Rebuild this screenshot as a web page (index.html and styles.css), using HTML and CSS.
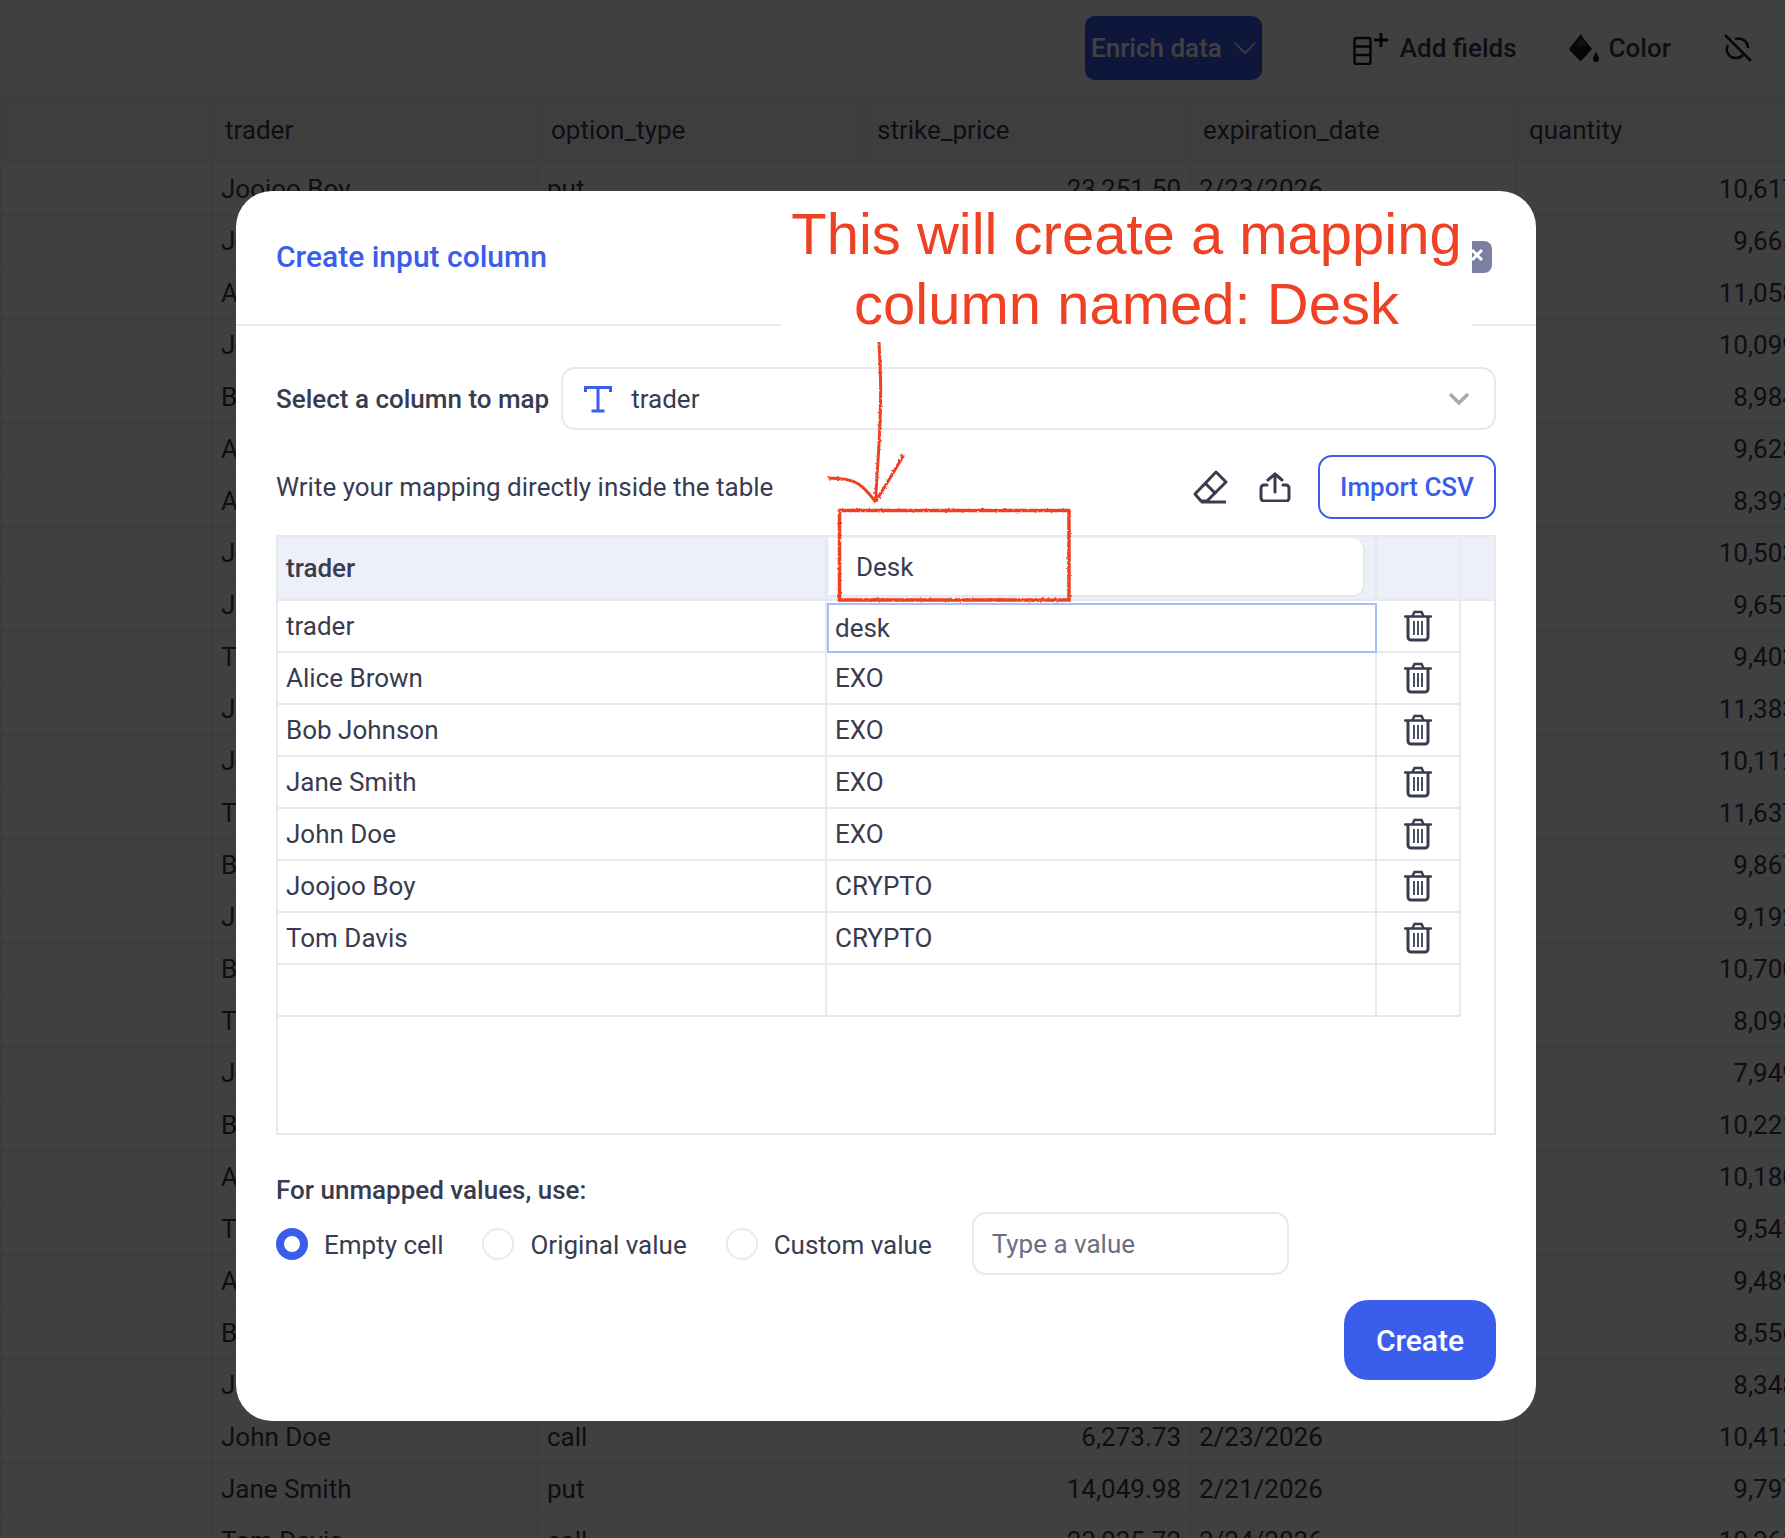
FILE: index.html
```html
<!DOCTYPE html>
<html lang="en">
<head>
    <meta charset="UTF-8">
    <title>Create input column</title>
    <link rel="stylesheet" href="styles.css">
</head>
<body>
<!-- Page behind the dialog -->
<div class="toolbar">
    <button class="enrich">Enrich data
        <svg width="22" height="14" viewBox="0 0 22 14"><path d="M1 2l10 10L21 2" fill="none" stroke="currentColor" stroke-width="1.6"/></svg>
    </button>
    <span class="toolbar-sep"></span>
    <span class="tool">
        <svg width="37" height="33" viewBox="0 0 37 33" fill="none" stroke="#1a1b24" stroke-width="2.5"><rect x="1.5" y="6" width="16" height="26" rx="2"/><path d="M1.5 14.5h16M1.5 23h16"/><path d="M28 1v14M21 8h14" stroke-width="3"/></svg>
        Add fields
    </span>
    <span class="tool">
        <svg width="30" height="30" viewBox="0 0 30 30"><path d="M12 1l1.500 3 9.500 12-10 11a2 2 0 0 1-3 0L1 17.500a2 2 0 0 1 0-3z" fill="#1a1b24"/><path d="M5 13h14L12 5z" fill="#404040"/><path d="M27 19c2 3 3 5 3 7a3 3 0 0 1-6 0c0-2 1-4 3-7z" fill="#1a1b24"/></svg>
        Color
    </span>
    <span class="tool">
        <svg width="30" height="30" viewBox="0 0 30 30" fill="none" stroke="#1a1b24" stroke-width="2.5"><path d="M2 2l26 26"/><path d="M5 12c-3 5 0 13 8 13 3 0 5-1 7-3"/><path d="M12 6c6-2 13 2 13 9"/></svg>
    </span>
</div>
<table class="sheet">
    <thead>
        <tr><th></th><th>trader</th><th>option_type</th><th>strike_price</th><th>expiration_date</th><th>quantity</th><th>direction</th></tr>
    </thead>
    <tbody>
        <tr><td></td><td>Joojoo Boy</td><td>put</td><td class="num">23,251.50</td><td>2/23/2026</td><td class="num">10,617.00</td><td>long</td></tr>
        <tr><td></td><td>John Doe</td><td></td><td></td><td></td><td class="num">9,665.00</td><td>long</td></tr>
        <tr><td></td><td>Alice Brown</td><td></td><td></td><td></td><td class="num">11,058.00</td><td>short</td></tr>
        <tr><td></td><td>Jane Smith</td><td></td><td></td><td></td><td class="num">10,099.00</td><td>short</td></tr>
        <tr><td></td><td>Bob Johnson</td><td></td><td></td><td></td><td class="num">8,984.00</td><td>long</td></tr>
        <tr><td></td><td>Alice Brown</td><td></td><td></td><td></td><td class="num">9,628.00</td><td>long</td></tr>
        <tr><td></td><td>Alice Brown</td><td></td><td></td><td></td><td class="num">8,392.00</td><td>short</td></tr>
        <tr><td></td><td>John Doe</td><td></td><td></td><td></td><td class="num">10,503.00</td><td>short</td></tr>
        <tr><td></td><td>Jane Smith</td><td></td><td></td><td></td><td class="num">9,657.00</td><td>long</td></tr>
        <tr><td></td><td>Tom Davis</td><td></td><td></td><td></td><td class="num">9,403.00</td><td>long</td></tr>
        <tr><td></td><td>Jane Smith</td><td></td><td></td><td></td><td class="num">11,383.00</td><td>long</td></tr>
        <tr><td></td><td>John Doe</td><td></td><td></td><td></td><td class="num">10,112.00</td><td>long</td></tr>
        <tr><td></td><td>Tom Davis</td><td></td><td></td><td></td><td class="num">11,637.00</td><td>short</td></tr>
        <tr><td></td><td>Bob Johnson</td><td></td><td></td><td></td><td class="num">9,867.00</td><td>short</td></tr>
        <tr><td></td><td>John Doe</td><td></td><td></td><td></td><td class="num">9,192.00</td><td>short</td></tr>
        <tr><td></td><td>Bob Johnson</td><td></td><td></td><td></td><td class="num">10,700.00</td><td>short</td></tr>
        <tr><td></td><td>Tom Davis</td><td></td><td></td><td></td><td class="num">8,098.00</td><td>long</td></tr>
        <tr><td></td><td>John Doe</td><td></td><td></td><td></td><td class="num">7,949.00</td><td>short</td></tr>
        <tr><td></td><td>Bob Johnson</td><td></td><td></td><td></td><td class="num">10,221.00</td><td>short</td></tr>
        <tr><td></td><td>Alice Brown</td><td></td><td></td><td></td><td class="num">10,180.00</td><td>long</td></tr>
        <tr><td></td><td>Tom Davis</td><td></td><td></td><td></td><td class="num">9,541.00</td><td>long</td></tr>
        <tr><td></td><td>Alice Brown</td><td></td><td></td><td></td><td class="num">9,489.00</td><td>long</td></tr>
        <tr><td></td><td>Bob Johnson</td><td></td><td></td><td></td><td class="num">8,556.00</td><td>short</td></tr>
        <tr><td></td><td>John Doe</td><td></td><td></td><td></td><td class="num">8,348.00</td><td>short</td></tr>
        <tr><td></td><td>John Doe</td><td>call</td><td class="num">6,273.73</td><td>2/23/2026</td><td class="num">10,412.00</td><td>long</td></tr>
        <tr><td></td><td>Jane Smith</td><td>put</td><td class="num">14,049.98</td><td>2/21/2026</td><td class="num">9,797.00</td><td>short</td></tr>
        <tr><td></td><td>Tom Davis</td><td>call</td><td class="num">23,035.72</td><td>2/24/2026</td><td class="num">10,261.00</td><td>long</td></tr>
    </tbody>
</table>

<!-- Dialog -->
<div class="overlay">
    <div class="modal">
        <header class="modal-head">
            <h2>Create input column</h2>
            <button class="close">
                <svg width="14" height="14" viewBox="0 0 14 14"><path d="M2 2l10 10M12 2L2 12" stroke="#fff" stroke-width="3"/></svg>
            </button>
        </header>

        <div class="modal-body">
            <div class="select-row">
                <label class="strong">Select a column to map</label>
                <div class="select">
                    <svg width="30" height="30" viewBox="0 0 30 30" fill="none" stroke="#3a5eeb" stroke-width="3"><path d="M2.500 8V3.500h25V8M15 3.500V27M8.500 27h13"/></svg>
                    <span>trader</span>
                    <svg class="chevron" width="22" height="14" viewBox="0 0 22 14"><path d="M2 2l9 9 9-9" fill="none" stroke="#a8a9b5" stroke-width="3.500"/></svg>
                </div>
            </div>

            <div class="write-row">
                <span class="write-text">Write your mapping directly inside the table</span>
                <svg class="eraser" width="36" height="34" viewBox="0 0 36 34" fill="none" stroke="#393b50" stroke-width="3" stroke-linejoin="round"><path d="M23 2l10 10-19 19H8l-6-7z"/><path d="M12 13l11 11M8 32h25"/></svg>
                <svg class="upload" width="32" height="30" viewBox="0 0 32 30" fill="none" stroke="#393b50" stroke-width="3" stroke-linecap="round"><path d="M8 13H5a3 3 0 0 0-3 3v10a3 3 0 0 0 3 3h22a3 3 0 0 0 3-3V16a3 3 0 0 0-3-3h-3"/><path d="M16 20V2M9 8l7-6 7 6"/></svg>
                <button class="import">Import CSV</button>
            </div>

            <div class="map-table">
                <div class="map-head">
                    <div class="map-cell map-title">trader</div>
                    <div class="map-cell map-name"><span class="name-input">Desk</span></div>
                    <div class="map-cell"></div>
                </div>
                <div class="map-row"><div class="map-cell">trader</div><div class="map-cell selected">desk</div><div class="map-cell trash"><svg width="28" height="32" viewBox="0 0 28 32" fill="none" stroke="#393b50"><use href="#trash"/></svg></div></div>
                <div class="map-row"><div class="map-cell">Alice Brown</div><div class="map-cell">EXO</div><div class="map-cell trash"><svg width="28" height="32" viewBox="0 0 28 32" fill="none" stroke="#393b50"><use href="#trash"/></svg></div></div>
                <div class="map-row"><div class="map-cell">Bob Johnson</div><div class="map-cell">EXO</div><div class="map-cell trash"><svg width="28" height="32" viewBox="0 0 28 32" fill="none" stroke="#393b50"><use href="#trash"/></svg></div></div>
                <div class="map-row"><div class="map-cell">Jane Smith</div><div class="map-cell">EXO</div><div class="map-cell trash"><svg width="28" height="32" viewBox="0 0 28 32" fill="none" stroke="#393b50"><use href="#trash"/></svg></div></div>
                <div class="map-row"><div class="map-cell">John Doe</div><div class="map-cell">EXO</div><div class="map-cell trash"><svg width="28" height="32" viewBox="0 0 28 32" fill="none" stroke="#393b50"><use href="#trash"/></svg></div></div>
                <div class="map-row"><div class="map-cell">Joojoo Boy</div><div class="map-cell">CRYPTO</div><div class="map-cell trash"><svg width="28" height="32" viewBox="0 0 28 32" fill="none" stroke="#393b50"><use href="#trash"/></svg></div></div>
                <div class="map-row"><div class="map-cell">Tom Davis</div><div class="map-cell">CRYPTO</div><div class="map-cell trash"><svg width="28" height="32" viewBox="0 0 28 32" fill="none" stroke="#393b50"><use href="#trash"/></svg></div></div>
                <div class="map-row"><div class="map-cell"></div><div class="map-cell"></div><div class="map-cell"></div></div>
            </div>

            <div class="unmapped strong">For unmapped values, use:</div>
            <div class="radio-row">
                <span class="radio on"></span><span class="radio-label">Empty cell</span>
                <span class="radio"></span><span class="radio-label">Original value</span>
                <span class="radio"></span><span class="radio-label">Custom value</span>
                <span class="value-input">Type a value</span>
            </div>
            <div class="actions"><button class="create">Create</button></div>
        </div>

        <!-- Annotation pasted on top of the screenshot -->
        <div class="note">This will create a mapping<br>column named: Desk</div>
        <svg class="scribble" width="260" height="275" viewBox="0 0 260 275" fill="none" stroke="#ef4123" stroke-width="3">
            <filter id="rough"><feTurbulence type="fractalNoise" baseFrequency="0.4" numOctaves="2" seed="3"/><feDisplacementMap in="SourceGraphic" scale="2.500"/></filter>
            <g filter="url(#rough)">
                <path d="M19.500 175.500H249V265H19.500z" stroke-width="3.500"/>
                <path d="M59 7c2 40 2 50 1 80-1 30-3 50-4.500 80"/>
                <path d="M8.500 143c14 1 22 1 30 6 6 4 12 11 17 18 8-14 20-32 28-47"/>
            </g>
        </svg>
    </div>
</div>

<svg width="0" height="0" class="defs">
    <g id="trash">
        <path d="M8.500 6l2-4h7l2 4" stroke-width="2.500"/>
        <path d="M1 6.500h26" stroke-width="2.500" stroke-linecap="round"/>
        <path d="M4 6.500V27a3 3 0 0 0 3 3h14a3 3 0 0 0 3-3V6.500" stroke-width="3"/>
        <path d="M10 11v14M14 11v14M18 11v14" stroke-width="1.800"/>
    </g>
</svg>
</body>
</html>
```

FILE: styles.css
```css
/* General Styles */
html, body {
    margin: 0;
    height: 1538px;
    overflow: hidden;
}
body {
    font-family: Roboto, sans-serif;
    font-size: 26px;
    color: #393b50;
    background: #fff;
}
button {
    font-family: inherit;
    cursor: pointer;
}
.defs {
    position: absolute;
}

/* Page behind the dialog */
.toolbar {
    height: 96px;
    box-sizing: border-box;
    padding: 16px 0 16px 1085px;
    display: flex;
    align-items: center;
    white-space: nowrap;
}
.enrich {
    width: 206px;
    height: 64px;
    display: flex;
    align-items: center;
    justify-content: center;
    gap: 12px;
    border: none;
    border-radius: 10px;
    background: #3a5eeb;
    color: #fff;
    font-size: 26px;
    font-weight: 500;
}
.toolbar-sep {
    width: 2px;
    height: 64px;
    margin: 0 55px 0 36px;
    background: #eceef2;
}
.tool {
    display: flex;
    align-items: center;
    gap: 10px;
    margin-right: 52px;
    font-weight: 500;
}
.sheet {
    width: 1985px;
    table-layout: fixed;
    border-collapse: collapse;
    white-space: nowrap;
}
.sheet th:first-child { width: 185px; }
.sheet th { width: 300px; }
.sheet th {
    height: 64px;
    padding: 0 12px;
    text-align: left;
    font-weight: 400;
    background: #f5f6fb;
    border: 2px solid #eceef2;
}
.sheet td {
    height: 52px;
    padding: 0 8px;
    box-sizing: border-box;
    overflow: hidden;
    border: 2px solid #eceef2;
}
.sheet .num {
    text-align: right;
}

/* Dialog */
.overlay {
    position: fixed;
    inset: 0;
    padding: 191px 0 0 236px;
    background: rgba(0, 0, 0, 0.75);
}
.modal {
    position: relative;
    width: 1300px;
    height: 1230px;
    background: #fff;
    border-radius: 36px;
}
.modal-head {
    height: 135px;
    box-sizing: border-box;
    padding: 0 44px 2px 40px;
    display: flex;
    align-items: center;
    justify-content: space-between;
    border-bottom: 2px solid #e9eaf0;
}
.modal-head h2 {
    margin: 0;
    font-size: 30px;
    font-weight: 500;
    color: #3a5eeb;
}
.close {
    width: 32px;
    height: 32px;
    padding: 0 0 0 2px;
    margin-top: 0;
    border: none;
    border-radius: 8px;
    background: #7b80a0;
    text-align: center;
}
.modal-body {
    padding: 41px 40px 0;
}
.strong {
    font-weight: 500;
}
.select-row {
    display: flex;
    align-items: center;
    gap: 12px;
}
.select {
    flex: 1;
    height: 63px;
    box-sizing: border-box;
    padding: 0 24px 0 20px;
    display: flex;
    align-items: center;
    gap: 18px;
    border: 2px solid #e8e9ef;
    border-radius: 14px;
}
.chevron {
    margin-left: auto;
}
.write-row {
    height: 64px;
    margin-top: 25px;
    display: flex;
    align-items: center;
}
.write-text {
    margin-right: auto;
}
.upload {
    margin: 0 27px 0 30px;
}
.import {
    width: 178px;
    height: 64px;
    border: 2px solid #3a5eeb;
    border-radius: 14px;
    background: #fff;
    color: #3a5eeb;
    font-size: 26px;
    font-weight: 500;
}

/* Mapping table */
.map-table {
    height: 600px;
    box-sizing: border-box;
    margin-top: 16px;
    border: 2px solid #e8e9ef;
}
.map-head, .map-row {
    display: grid;
    grid-template-columns: 549px 550px 84px;
}
.map-head {
    height: 64px;
    box-sizing: border-box;
    background: #edf0f8;
    border-bottom: 2px solid #e8e9ef;
}
.map-row {
    height: 52px;
}
.map-cell {
    box-sizing: border-box;
    padding: 0 8px;
    display: flex;
    align-items: center;
    border-right: 2px solid #e8e9ef;
    border-bottom: 2px solid #e8e9ef;
}
.map-head .map-cell {
    border-bottom: none;
}
.map-title {
    font-weight: 500;
}
.map-name {
    padding: 1px 10px 2px 2px;
}
.name-input {
    align-self: stretch;
    flex: 1;
    display: flex;
    align-items: center;
    padding-left: 27px;
    background: #fff;
    border-right: 2px solid #e8e9ef;
    border-bottom: 2px solid #e8e9ef;
    border-radius: 0 12px 12px 0;
}
.selected {
    margin: 2px 0 0;
    border: 2px solid #aabcf5;
    padding-left: 6px;
    background: #fff;
}
.trash {
    justify-content: center;
}

/* Unmapped values */
.unmapped {
    margin-top: 40px;
    line-height: 30px;
}
.radio-row {
    height: 63px;
    margin-top: 7px;
    display: flex;
    align-items: center;
}
.radio {
    width: 32px;
    height: 32px;
    box-sizing: border-box;
    border: 2px solid #e8e9ef;
    border-radius: 50%;
}
.radio.on {
    border: 8px solid #3a5eeb;
}
.radio-label {
    margin: 3px 39px 0 16px;
}
.value-input {
    width: 317px;
    height: 63px;
    box-sizing: border-box;
    margin-left: 1px;
    padding-left: 18px;
    display: flex;
    align-items: center;
    color: #6c6e82;
    border: 2px solid #e8e9ef;
    border-radius: 14px;
}
.actions {
    margin-top: 25px;
    display: flex;
    justify-content: flex-end;
}
.create {
    width: 152px;
    height: 80px;
    border: none;
    border-radius: 24px;
    background: #3a5eeb;
    color: #fff;
    font-size: 30px;
    font-weight: 500;
}

/* Annotation */
.note {
    position: absolute;
    left: 545px;
    top: 8px;
    width: 691px;
    height: 129px;
    background: #fff;
    color: #ef4123;
    font-family: "Liberation Sans", Arial, sans-serif;
    font-size: 58px;
    line-height: 70px;
    text-align: center;
}
.scribble {
    position: absolute;
    left: 584px;
    top: 144px;
}
```
